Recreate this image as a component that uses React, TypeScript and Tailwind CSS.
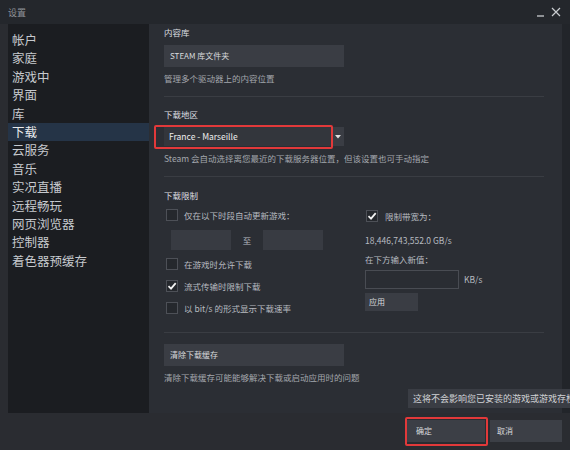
import React from "react";

const font = { fontFamily: '"Noto Sans CJK SC", "Noto Sans", "Liberation Sans", sans-serif' };

function Check({ checked }: { checked?: boolean }) {
  return (
    <div className="w-[12px] h-[12px] border border-[#4d5057] bg-[#25282d] flex items-center justify-center shrink-0">
      {checked && (
        <svg width="10" height="10" viewBox="0 0 10 10">
          <path d="M1.5 5.2 L4 7.6 L8.7 2.2" stroke="#f2f2f2" strokeWidth="1.8" fill="none" />
        </svg>
      )}
    </div>
  );
}

export default function App() {
  const items = ["帐户", "家庭", "游戏中", "界面", "库", "下载", "云服务", "音乐", "实况直播", "远程畅玩", "网页浏览器", "控制器", "着色器预缓存"];
  return (
    <div className="w-[570px] h-[450px] bg-[#2a2c31] flex flex-col relative overflow-hidden" style={font}>
      {/* title bar */}
      <div className="h-[24px] bg-[#24272c] flex items-center justify-between pl-[8px] pr-[9px] shrink-0">
        <span className="text-[9px] text-[#8f939a] leading-none">设置</span>
        <div className="flex items-center gap-[6px] text-[#c9ccd0]">
          <svg width="9" height="9" viewBox="0 0 9 9"><path d="M1 8 H8" stroke="#c9ccd0" strokeWidth="1.3" /></svg>
          <svg width="10" height="10" viewBox="0 0 10 10"><path d="M1 1 L9 9 M9 1 L1 9" stroke="#c9ccd0" strokeWidth="1.2" /></svg>
        </div>
      </div>
      {/* main */}
      <div className="h-[389px] flex pl-[8px] shrink-0">
        <div className="w-[141px] bg-[#1b1d21] pt-[7px] flex flex-col">
          {items.map((t) => (
            <div
              key={t}
              className={`h-[18.4px] leading-[18.4px] text-[12.5px] pl-[4px] ${t === "下载" ? "bg-[#253447] text-[#e8eaec]" : "text-[#c6c9ce]"}`}
            >
              {t}
            </div>
          ))}
        </div>
        <div className="w-[413px] bg-[#2b2e34] pl-[15px] flex flex-col text-[8.5px]">
          <div className="mt-[1px] h-[14px] leading-[14px] text-[#dcdee1]">内容库</div>
          <div className="mt-[6px] h-[22px] w-[180px] bg-[#3a3d44] flex items-center pl-[6px] text-[8px] text-[#d8dadd]">STEAM 库文件夹</div>
          <div className="mt-[4px] h-[14px] leading-[14px] text-[#a3a7ad]">管理多个驱动器上的内容位置</div>
          <div className="mt-[11px] h-px w-[380px] bg-[#3a3d43]" />
          <div className="mt-[10px] h-[14px] leading-[14px] text-[#dcdee1]">下载地区</div>
          <div className="mt-[6px] h-[19px] w-[180px] flex">
            <div className="flex-1 bg-[#33363c] flex items-center pl-[5px] text-[8.5px] text-[#eeeeee]">France - Marseille</div>
            <div className="w-[13px] bg-[#3a3d44] flex items-center justify-center">
              <svg width="6" height="4" viewBox="0 0 6 4"><path d="M0 0 H6 L3 3.5 Z" fill="#e0e0e0" /></svg>
            </div>
          </div>
          <div className="mt-[5px] h-[14px] leading-[14px] text-[#a3a7ad]">Steam 会自动选择离您最近的下载服务器位置，但该设置也可手动指定</div>
          <div className="mt-[11px] h-px w-[380px] bg-[#3a3d43]" />
          <div className="mt-[11px] h-[14px] leading-[14px] text-[#dcdee1]">下载限制</div>
          <div className="flex">
            <div className="w-[201px] flex flex-col">
              <div className="mt-[6px] h-[14px] flex items-center pl-[2px] gap-[6px]">
                <Check />
                <span className="text-[#b7bbc0]">仅在以下时段自动更新游戏：</span>
              </div>
              <div className="mt-[8px] h-[20px] flex items-center pl-[7px]">
                <div className="w-[60px] h-[20px] bg-[#383b42]" />
                <span className="w-[32px] text-center text-[#b7bbc0]">至</span>
                <div className="w-[60px] h-[20px] bg-[#383b42]" />
              </div>
              <div className="mt-[7px] h-[14px] flex items-center pl-[2px] gap-[6px]">
                <Check />
                <span className="text-[#b7bbc0]">在游戏时允许下载</span>
              </div>
              <div className="mt-[8px] h-[14px] flex items-center pl-[2px] gap-[6px]">
                <Check checked />
                <span className="text-[#b7bbc0]">流式传输时限制下载</span>
              </div>
              <div className="mt-[8px] h-[14px] flex items-center pl-[2px] gap-[6px]">
                <Check />
                <span className="text-[#b7bbc0]">以 bit/s 的形式显示下载速率</span>
              </div>
            </div>
            <div className="flex flex-col">
              <div className="mt-[7px] h-[14px] flex items-center pl-[1px] gap-[7px]">
                <Check checked />
                <span className="text-[#b7bbc0]">限制带宽为：</span>
              </div>
              <div className="mt-[10px] h-[14px] leading-[14px] text-[#b7bbc0]">18,446,743,552.0 GB/s</div>
              <div className="mt-[5px] h-[14px] leading-[14px] text-[#b7bbc0]">在下方输入新值：</div>
              <div className="mt-[4px] h-[19px] flex items-center">
                <div className="w-[94px] h-[19px] border border-[#494c53] bg-[#2a2d33]" />
                <span className="ml-[5px] text-[#b7bbc0]">KB/s</span>
              </div>
              <div className="mt-[4px] h-[18px] w-[53px] bg-[#3a3d44] flex items-center pl-[4px] text-[8px] text-[#d8dadd]">应用</div>
            </div>
          </div>
          <div className="mt-[17px] h-px w-[380px] bg-[#3a3d43]" />
          <div className="mt-[11px] h-[22px] w-[180px] bg-[#3a3d44] flex items-center pl-[6px] text-[8px] text-[#d8dadd]">清除下载缓存</div>
          <div className="mt-[4px] h-[14px] leading-[14px] text-[#a3a7ad]">清除下载缓存可能能够解决下载或启动应用时的问题</div>
        </div>
        <div className="flex-1 bg-[#22252a]" />
      </div>
      {/* bottom buttons */}
      <div className="flex-1 flex justify-end items-start pt-[7px] pr-[8px] gap-[5px]">
        <div className="w-[78px] h-[22px] bg-[#3c3f46] flex items-center pl-[9px] text-[8px] text-[#d8dadd]">确定</div>
        <div className="w-[72px] h-[22px] bg-[#3c3f46] flex items-center pl-[7px] text-[8px] text-[#d8dadd]">取消</div>
      </div>
      {/* tooltip */}
      <div className="absolute left-[408px] top-[389px] w-[170px] h-[19px] bg-[#3a3d44] flex items-center pl-[5px] text-[9px] text-[#d0d2d5] whitespace-nowrap overflow-hidden">
        这将不会影响您已安装的游戏或游戏存档
      </div>
      {/* annotation boxes */}
      <div className="absolute left-[154px] top-[125px] w-[179px] h-[24px] border-2 border-[#e2393a] rounded-[2px]" />
      <div className="absolute left-[405px] top-[417px] w-[83px] h-[29px] border-2 border-[#e2393a] rounded-[2px]" />
    </div>
  );
}
